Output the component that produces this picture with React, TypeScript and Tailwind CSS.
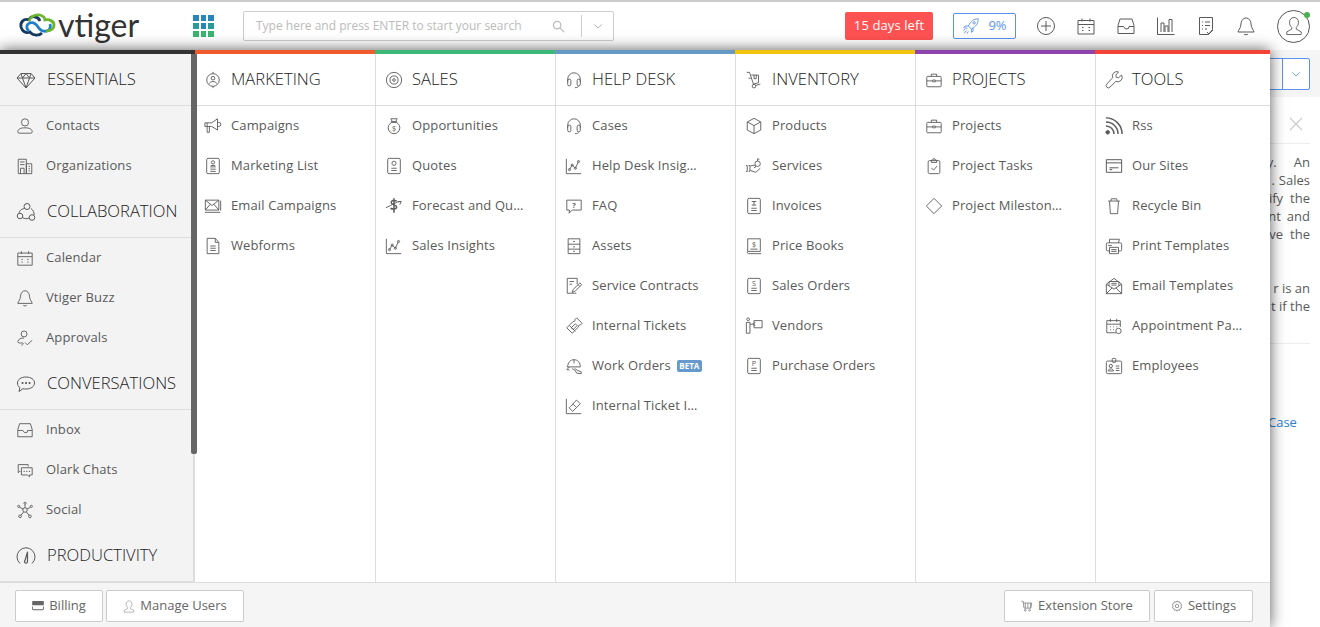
import React from "react";

const P: Record<string, React.ReactNode> = {
  gem: <path d="M5 3.500h10l4 4.500-9 10L1 8zM1 8h18M6.500 8l3.500 10 3.500-10M5 3.500 6.500 8 10 3.500 13.500 8 15 3.500" />,
  target: <><circle cx="10" cy="10" r="7" /><circle cx="10" cy="8" r="2" /><path d="M6 14c.5-3 7.500-3 8 0M10 1v2M10 17v2" /></>,
  sales: <><circle cx="10" cy="10" r="8.500" /><circle cx="10" cy="10" r="4.500" /><circle cx="10" cy="10" r="1.500" /></>,
  headset: <><path d="M3 12V9a7 7 0 0 1 14 0v3M15 17c0 1-2 1.500-4 1.500" /><rect x="3" y="9" width="3.500" height="7.500" rx="1.700" /><rect x="13.500" y="9" width="3.500" height="7.500" rx="1.700" /></>,
  truck: <><path d="M2 1.500h3L9.500 15M7 4.500h8V13l-5.500 1.500M10 4.500v4h2.500v-4M6.500 8H4" /><circle cx="10" cy="16.800" r="2" /><path d="M12 16l5-1.500" /></>,
  case: <><rect x="2" y="6" width="16" height="11.500" rx="1" /><path d="M7 6V3.500h6V6M2 11h6M12 11h6" /><rect x="8.500" y="10" width="3" height="2" /></>,
  wrench: <path d="M18.500 4.500l-3.500 3-2.500-.5-.5-2.500 3-3.500a5 5 0 0 0-6.500 6.500L2 14.500a2.300 2.300 0 0 0 3.500 3.500L12 11.500a5 5 0 0 0 6.500-7z" />,
  user: <><circle cx="10" cy="6" r="4" /><path d="M2 16.500c0-3 3-4.500 8-4.500s8 1.500 8 4.500c0 .8-.5 1.500-1.500 1.500h-13c-1 0-1.500-.7-1.500-1.500z" /></>,
  org: <path d="M2.500 2.500h9v16h-9zM11.500 7.500h6v11h-6zM4.500 5.500h5M4.500 8.500h5M5 18.500v-6h4v6M14 10.500h1.500M14 13h1.500M14 15.500h1.500" />,
  collab: <><circle cx="11" cy="4.500" r="3" /><circle cx="4" cy="14" r="2.800" /><circle cx="16" cy="15.500" r="2.800" /><path d="M8.500 6.500C5 7 3 9 3.500 11M15 6.500c2 1.500 3.500 4 3 6.500M6.500 15.500c2 1.500 4 1.500 6.500.5" /></>,
  cal: <path d="M2 4.500h16V18H2zM2 8.500h16M6 2.500v3M14 2.500v3M6 11.500h1.500M12.500 11.500H14M6 14.500h1.500M12.500 14.500H14" />,
  bell: <path d="M10 2c-3 0-5 3-5 6 0 4-3 6.500-3 8h16c0-1.500-3-4-3-8 0-3-2-6-5-6zM8 18c.5 1 3.500 1 4 0" />,
  appr: <><circle cx="9" cy="5.500" r="3.300" /><path d="M2 14c.5-3 3.500-4 7-4M2 14c0 2 3 1.500 5 1.500 2 0 1 2-1 2.500M10 15l2.500 2.500L18 12.500" /></>,
  chat: <><path d="M10 3c5 0 8.500 2.500 8.500 6S15 15 10 15c-1 0-2 0-3-.3L3 17.500l.8-4C2 12.500 1.500 11 1.500 9 1.500 5.500 5 3 10 3z" /><path d="M6.500 9h.1M10 9h.1M13.500 9h.1" strokeWidth="2" strokeLinecap="round" /></>,
  inbox: <path d="M2 9.500 4 3h12l2 6.500V17.500H2zM2 10.500h5.500l2 2.500 3-.5L13 10.500h5" />,
  olark: <><path d="M6 7.500h12v8h-3v2l-2.500-2H6zM5 11.500H4L2.500 13V4h11v2" /><path d="M9 11.500h.1M12 11.500h.1M15 11.500h.1" strokeWidth="1.500" strokeLinecap="round" /></>,
  social: <><circle cx="10" cy="10" r="2.500" /><circle cx="10" cy="2.500" r="1.200" /><circle cx="3" cy="6" r="1.200" /><circle cx="17" cy="6" r="1.200" /><circle cx="4.500" cy="17" r="1.500" /><circle cx="15.500" cy="17" r="1.500" /><path d="M10 4v3.500M4 7l4 2M16 7l-4 2M5.500 16l3-4M14.500 16l-3-4" /></>,
  gauge: <><path d="M4 17.500a9 9 0 1 1 12 0" /><path d="M11.500 6 9 14.500a1.500 1.500 0 1 0 2.500 1zM5 10.500h.1M3.500 14h.1M15 10.500h.1M16.500 14h.1M6.500 7h.1" strokeWidth="1.200" /></>,
  mega: <path d="M1 6.500h7.500L15 2V14.500L8.500 10.500H1zM3.500 10.500V17H6v-6.500M15 6h1.500a2 2 0 0 1 0 4.500H15M3.500 6.500v4" />,
  mlist: <><rect x="3" y="1.500" width="14" height="17" rx="1.500" /><circle cx="10" cy="6" r="1.800" /><path d="M7 11h6M7 13.500h6M7 16h6M7.500 9.500h5" /></>,
  email: <path d="M1.500 3.500h15v11h-15zM1.500 3.500l7.500 6 7.500-6M1.500 14.500l5.500-6.500M16.500 14.500 11 8M1 17h17M18.500 4v11" />,
  doc: <path d="M3.500 1.500h9l4 4.500v12.500h-13zM12.500 1.500V6h4M7 10h6M7 12.500h6M7 15h6" />,
  bag: <><path d="M6 2h8M7 2.500l1 3h4l1-3M6.500 5.500h7" /><circle cx="10" cy="12" r="6.500" /><text x="10" y="15" fontSize="8" textAnchor="middle" stroke="none" fill="currentColor">$</text></>,
  quote: <><rect x="3" y="1.500" width="14" height="17" rx="1.500" /><circle cx="10" cy="7" r="2.300" /><path d="M7 12.500h6M7 15h6" /></>,
  fore: <><path d="M1 12l5-2.500 8-4 4-.5-1.500 3.500M14 5l4 0" /><path d="M13 4.500C10 3 6.500 4 7 6.500s6 2 6 4.500-4 3-7 1.500M10 1.500v16" strokeWidth="1.700" /></>,
  ins: <><path d="M1.500 2v16.500H18" /><path d="M5 14l3-5 3.500 3.500L15 5" /><circle cx="5" cy="14" r="1.200" /><circle cx="8" cy="9" r="1.200" /><circle cx="11.500" cy="12.500" r="1.200" /><circle cx="15" cy="5" r="1.200" /></>,
  faq: <><path d="M2 3.500h16v11H8L4.500 18l.5-3.500H2z" /><text x="10" y="12" fontSize="8" fontWeight="700" textAnchor="middle" stroke="none" fill="currentColor">?</text></>,
  assets: <path d="M3.500 2h13v16.500h-13zM3.500 8h13M3.500 13.500h13M9 5h2M9 11h2M9 16h2" />,
  contr: <path d="M12.500 18H2.500V1.500H13.500V8M5 5h5M5 8h3M8 17l1-3 7.500-7.500 2 2L11 16zM14.500 8.500l2 2" />,
  ticket: <path d="M13 1l6 6-2 2a1.500 1.500 0 0 0-2 2L8 18 2 12l7-7a1.500 1.500 0 0 0 2-2zM7 12l4.500-4.500 2 2L9 14zM5 9.500 11.500 16" />,
  helm: <path d="M3 11c0-5 3-8 7-8s7 3 7 8H2M10 3v4M5 11l-3 3 3 .5M8 13l3 1.500 2 3.500 5 .5v-2l-5-2-2-2" />,
  tins: <><path d="M1.500 2v16.500H18" /><path d="M13 3.500l4 4-8.500 8.500-4-4 1.500-1.500 1-.5 4-5zM9 8l3 3" /></>,
  box: <path d="M10 1.500 17.500 5.500v9L10 18.500 2.500 14.500v-9zM2.500 5.500 10 9.500l7.500-4M10 9.500v9" />,
  serv: <><path d="M1 9.500h1.500V16H1M4 9.500h1.500V16H4M6 10l4-1 2 2-2 1M6 15l6 2 5-4.500" /><circle cx="14" cy="7.500" r="3" /><path d="M14 4.500V2l2 .5" /></>,
  inv: <><rect x="3" y="1.500" width="14" height="17" rx="1.500" /><path d="M7.500 5h5M10 5v4M7.500 9h5M7 12.500h6M7 15h6" /></>,
  book: <><path d="M3 2h14v14H3zM3 16c-1 1.500 0 2.500 1 2.500h14" /><text x="10" y="11" fontSize="8" textAnchor="middle" stroke="none" fill="currentColor">$</text><path d="M6 13.500h8" /></>,
  so: <><rect x="3" y="1.500" width="14" height="17" rx="1.500" /><text x="10" y="10" fontSize="8" textAnchor="middle" stroke="none" fill="currentColor">S</text><path d="M7 12.500h6M7 15h6" /></>,
  po: <><rect x="3" y="1.500" width="14" height="17" rx="1.500" /><text x="10" y="10" fontSize="8" textAnchor="middle" stroke="none" fill="currentColor">P</text><path d="M7 12.500h6M7 15h6" /></>,
  vend: <><circle cx="3.500" cy="2.500" r="1.500" /><path d="M1.500 18V6h4v12zM5.500 8h3M10 4h9v8h-9zM8.500 8l3-2M8.500 8l3 1.500" /></>,
  task: <><rect x="3.500" y="4" width="13" height="14.500" rx="1.500" /><path d="M7 4c0-1 1.500-1 2-1 0-2 2-2 2 0 .5 0 2 0 2 1v2H7zM7 12l2.500 2.500L13.500 10" /></>,
  diam: <path d="M10 1.500 18.500 10 10 18.500 1.500 10z" />,
  rss: <><circle cx="3" cy="17" r="2" fill="currentColor" /><path d="M1 10c5 0 9 4 9 9M1 5.500c7.500 0 13.500 6 13.500 13.500M1 1c10 0 18 8 18 18" strokeWidth="1.600" /></>,
  site: <path d="M1.500 3h17v14h-17zM1.500 6.500h17M5 12h10M5 14h3" strokeWidth="1.100" />,
  trash: <path d="M3.500 4.500h13M5 4.500l1 14h8l1-14M6.500 4.500 7 2h6l.5 2.500" />,
  print: <path d="M5 6.500V2.500h11l-1 4M3 6.500h14a1.500 1.500 0 0 1 1.500 1.500v6a1.500 1.500 0 0 1-1.500 1.500h-2M5 15.500H3a1.500 1.500 0 0 1-1.500-1.500V8A1.500 1.500 0 0 1 3 6.500M5 11.500h10v7H5zM7 14h6M7 16h6M3.500 9.500h4" />,
  mailo: <path d="M1.500 8 10 1.500 18.500 8v10.500h-17zM1.500 8 10 13.500 18.500 8M1.500 18.500 8 12M18.500 18.500 12 12M4.500 10V5h11v5M7 7h6M7 9h6" />,
  appt: <><path d="M12 17.500H2V4h15v7M2 8h15M6 2v3.500M13 2v3.500M5.500 11h1M9 11h1M12.500 11h1M5.500 14h1M9 14h1" /><circle cx="15" cy="15.500" r="3" /></>,
  emp: <><rect x="1.500" y="4.500" width="17" height="14" rx="1.500" /><rect x="8" y="1.500" width="4" height="4.500" rx="1" /><circle cx="6.500" cy="10" r="1.800" /><path d="M3.500 15.500c0-3 6-3 6 0zM12 10h4M12 12.500h4M12 15h4" /></>,
};

const Ic = ({ n, cls = "w-[18px] h-[18px]" }: { n: string; cls?: string }) => (
  <svg viewBox="0 0 20 20" fill="none" stroke="currentColor" strokeWidth="1" strokeLinejoin="round" className={cls + " shrink-0 text-[#5a5a5a]"}>
    {P[n]}
  </svg>
);

const Item = ({ n, t, badge, side }: { n: string; t: string; badge?: boolean; side?: boolean }) => (
  <div className={"h-10 flex items-center text-[13px] tracking-[0.12px] text-[#5a5a5a] whitespace-nowrap " + (side ? "pl-[16px] gap-[12px]" : "pl-[9px] gap-[9px]")}>
    <Ic n={n} />
    <span>{t}</span>
    {badge && <span className="ml-[-3px] w-[25px] h-[12px] rounded-[2px] bg-[#6699cc] text-white text-[8px] tracking-normal font-bold leading-[12px] text-center">BETA</span>}
  </div>
);

const Head = ({ n, t, side }: { n: string; t: string; side?: boolean }) => (
  <div className={"h-[52px] flex items-center border-b border-[#dddddd] text-[16.6px] font-light text-[#222] whitespace-nowrap " + (side ? "pl-[16px] gap-[11px]" : "pl-[9px] gap-[9px]")}>
    <Ic n={n} cls={side ? "w-[20px] h-[20px]" : "w-[18px] h-[18px]"} />
    <span>{t}</span>
  </div>
);

const cols: { n: string; t: string; bar: string; items: [string, string, boolean?][] }[] = [
  { n: "target", t: "MARKETING", bar: "bg-[#f15a2b]", items: [["mega", "Campaigns"], ["mlist", "Marketing List"], ["email", "Email Campaigns"], ["doc", "Webforms"]] },
  { n: "sales", t: "SALES", bar: "bg-[#3cb878]", items: [["bag", "Opportunities"], ["quote", "Quotes"], ["fore", "Forecast and Qu…"], ["ins", "Sales Insights"]] },
  { n: "headset", t: "HELP DESK", bar: "bg-[#6699c4]", items: [["headset", "Cases"], ["ins", "Help Desk Insig…"], ["faq", "FAQ"], ["assets", "Assets"], ["contr", "Service Contracts"], ["ticket", "Internal Tickets"], ["helm", "Work Orders", true], ["tins", "Internal Ticket I…"]] },
  { n: "truck", t: "INVENTORY", bar: "bg-[#f2c40f]", items: [["box", "Products"], ["serv", "Services"], ["inv", "Invoices"], ["book", "Price Books"], ["so", "Sales Orders"], ["vend", "Vendors"], ["po", "Purchase Orders"]] },
  { n: "case", t: "PROJECTS", bar: "bg-[#8e44ad]", items: [["case", "Projects"], ["task", "Project Tasks"], ["diam", "Project Mileston…"]] },
  { n: "wrench", t: "TOOLS", bar: "bg-[#f44336]", items: [["rss", "Rss"], ["site", "Our Sites"], ["trash", "Recycle Bin"], ["print", "Print Templates"], ["mailo", "Email Templates"], ["appt", "Appointment Pa…"], ["emp", "Employees"]] },
];

const left: { n: string; t: string; items: [string, string][] }[] = [
  { n: "gem", t: "ESSENTIALS", items: [["user", "Contacts"], ["org", "Organizations"]] },
  { n: "collab", t: "COLLABORATION", items: [["cal", "Calendar"], ["bell", "Vtiger Buzz"], ["appr", "Approvals"]] },
  { n: "chat", t: "CONVERSATIONS", items: [["inbox", "Inbox"], ["olark", "Olark Chats"], ["social", "Social"]] },
  { n: "gauge", t: "PRODUCTIVITY", items: [] },
];

const Logo = () => (
  <svg viewBox="0 0 38 27" className="w-[38px] h-[27px] shrink-0" fill="none" strokeWidth="2.800">
    <path d="M22 8c-2-5-9-6-11-1-5-2-9 2-8 7 1 4 5 7 9 5 3 4 9 4 12 1" stroke="#16395f" />
    <path d="M11 18c-3-2-3-7 1-8 3-1 6 1 8 4 2 3 5 5 9 4 3-1 4-4 3-7" stroke="#1e7fc8" />
    <path d="M11 8c1-4 6-7 11-6 3 1 5 3 5 5 4-1 9 1 9 5 0 4-4 6-8 6" stroke="#6bb62d" />
  </svg>
);

const Topbtn = ({ n }: { n: string }) => <Ic n={n} cls="w-[20px] h-[20px]" />;

const Btn = ({ children, cls }: { children: React.ReactNode; cls: string }) => (
  <div className={"h-[32px] flex items-center justify-center gap-[5px] bg-white border border-[#cccccc] rounded-[2px] text-[13px] text-[#666] " + cls}>{children}</div>
);

export default function App() {
  return (
    <div className="relative w-[1320px] h-[627px] overflow-hidden bg-white font-['Open_Sans',sans-serif]">
      <header className="h-[50px] border-t-2 border-[#cccccc] flex items-center">
        <div className="w-[193px] pl-[18px] flex items-center gap-[2px]">
          <Logo />
          <span className="font-['Lato',sans-serif] text-[32px] leading-none text-[#333] pb-[3px]">vtiger</span>
        </div>
        <div className="grid grid-cols-3 gap-[2px] w-[21px] shrink-0">
          {["bg-[#2a86b8]", "bg-[#2a86b8]", "bg-[#2a86b8]", "bg-[#2a9a9a]", "bg-[#2a86b8]", "bg-[#2a9a9a]", "bg-[#3cb371]", "bg-[#3cb371]", "bg-[#3cb371]"].map((c, i) => (
            <div key={i} className={"h-[6px] " + c} />
          ))}
        </div>
        <div className="ml-[29px] w-[371px] h-[30px] border border-[#cccccc] rounded-[2px] flex items-center pl-[12px] text-[12px] text-[#bbbbbb] whitespace-nowrap">
          <span className="w-[296px]">Type here and press ENTER to start your search</span>
          <svg viewBox="0 0 14 14" className="w-[13px] h-[13px] text-[#bbb]" fill="none" stroke="currentColor" strokeWidth="1.300"><circle cx="5.500" cy="5.500" r="4" /><path d="M8.500 8.500l4.500 4.500" /></svg>
          <div className="ml-[16px] w-px h-[22px] bg-[#cccccc]" />
          <svg viewBox="0 0 12 12" className="ml-[11px] w-[10px] h-[10px] text-[#aaa]" fill="none" stroke="currentColor"><path d="M1.500 4 6 8.500 10.500 4" /></svg>
        </div>
        <div className="ml-[231px] w-[88px] h-[28px] bg-[#ff5252] rounded-[2px] text-white text-[13px] tracking-[0.1px] flex items-center justify-center">15 days left</div>
        <div className="ml-[20px] w-[63px] h-[26px] border border-[#5a93ee] rounded-[2px] flex items-center justify-center gap-[8px] text-[13px] text-[#5a93ee]">
          <svg viewBox="0 0 20 20" className="w-[18px] h-[18px]" fill="none" stroke="currentColor"><path d="M18 2c-5 0-8 2.500-11 8l3.500 3.500c5-3 7.500-6 7.500-11.500zM7 10H3.500L2 12l4 .5M10.500 13.500V17l2-1.500-.5-4M5 15l-2.500 3M7 16l-1.500 2.500M3.500 13.500 1.500 15" /><circle cx="13.500" cy="6.500" r="1.300" /></svg>
          9%
        </div>
        <div className="ml-[20px] flex items-center gap-[20px]">
          <svg viewBox="0 0 20 20" fill="none" stroke="currentColor" className="w-[20px] h-[20px] text-[#5a5a5a]"><circle cx="10" cy="10" r="8.500" /><path d="M10 5v10M5 10h10" /></svg>
          <Topbtn n="cal" />
          <Topbtn n="inbox" />
          <svg viewBox="0 0 20 20" fill="none" stroke="currentColor" className="w-[20px] h-[20px] text-[#5a5a5a]"><path d="M1.500 1.500v17h17M5 16V7h3v9M9 16V10h3v6M13 16V3.500h3V16" /></svg>
          <svg viewBox="0 0 20 20" fill="none" stroke="currentColor" className="w-[20px] h-[20px] text-[#5a5a5a]"><path d="M3.500 1.500h13v12l-4 5h-9zM6 6h1M9 6h5M6 9.500h1M9 9.500h5M6 13h1M9 13h2M11 16l2 2 4-4" /></svg>
          <Topbtn n="bell" />
        </div>
        <div className="relative ml-[21px] w-[33px] h-[33px] rounded-full border border-[#555] flex items-center justify-center">
          <svg viewBox="0 0 20 22" fill="none" stroke="currentColor" className="w-[18px] h-[20px] text-[#5a5a5a]"><path d="M10 1.500c-3 0-5 2.500-5 5.500 0 2.500 1 4 2.500 5.500v2L2 17.500V20.500h16v-3l-5.500-3v-2C14 11 15 9.500 15 7c0-3-2-5.500-5-5.500z" /></svg>
          <span className="absolute right-[-1px] top-[1px] w-[6px] h-[6px] rounded-full bg-[#4caf50]" />
        </div>
      </header>

      {/* page behind the menu */}
      <div className="h-[47px] bg-[#f5f5f5] flex justify-end items-center pr-[10px]">
        <div className="w-[60px] h-[32px] bg-white border border-[#5a93ee] rounded-[2px] flex justify-end">
          <div className="w-[27px] border-l border-[#5a93ee] flex items-center justify-center text-[#5a93ee]">
            <svg viewBox="0 0 12 12" className="w-[10px] h-[10px]" fill="none" stroke="currentColor"><path d="M1.500 4 6 8.500 10.500 4" /></svg>
          </div>
        </div>
      </div>
      <div className="w-[60px] ml-auto mr-[10px] text-[13px] leading-[18px] text-[#5a5a5a] whitespace-nowrap">
        <div className="h-[47px] border-b border-[#eeeeee] flex items-center justify-end pr-[7px] pt-[7px]">
          <svg viewBox="0 0 14 14" className="w-[14px] h-[14px] text-[#cccccc]" fill="none" stroke="currentColor" strokeWidth="1.200"><path d="M1 1l12 12M13 1 1 13" /></svg>
        </div>
        <div className="pt-[9px] flex flex-col items-end">
          <div className="flex gap-[17px]"><span>y.</span><span>An</span></div>
          <div className="flex gap-[4px]"><span>.</span><span>Sales</span></div>
          <div className="flex gap-[7px]"><span>ify</span><span>the</span></div>
          <div className="flex gap-[6px]"><span>nt</span><span>and</span></div>
          <div className="flex gap-[7px]"><span>ive</span><span>the</span></div>
          <div className="h-[36px]" />
          <div>r is an</div>
          <div>t if the</div>
        </div>
        <div className="mt-[28px] border-t border-[#eeeeee] h-[70px]" />
        <div className="text-[#2b7fd6] ml-[18px]">Case</div>
      </div>

      {/* mega menu */}
      <div className="absolute left-0 top-[50px] w-[1270px] h-[577px] flex flex-col bg-white shadow-[0_0_14px_rgba(0,0,0,0.65)]">
        <div className="flex flex-1 min-h-0">
          <div className="relative w-[195px] shrink-0 bg-[#f3f3f3] flex flex-col border-t-4 border-[#333333]">
            <div className="overflow-hidden flex-1">
              {left.map((s) => (
                <div key={s.t}>
                  <Head n={s.n} t={s.t} side />
                  {s.items.map(([n, t]) => <Item key={t} n={n} t={t} side />)}
                </div>
              ))}
            </div>
            <div className="absolute right-0 top-0 bottom-0 w-[2px] bg-[#dddddd]" />
            <div className="absolute right-[-2px] top-0 w-[6px] h-[400px] bg-[#666666] rounded-b-[2px]" />
          </div>
          {cols.map((c, i) => (
            <div key={c.t} className={"shrink-0 flex flex-col " + (i === 0 ? "w-[180px]" : i === 5 ? "w-[175px] border-l border-[#dddddd]" : "w-[180px] border-l border-[#dddddd]")}>
              <div className={"h-[4px] " + (i === 0 ? "" : "-ml-px ") + c.bar} />
              <Head n={c.n} t={c.t} />
              {c.items.map(([n, t, b]) => <Item key={t} n={n} t={t} badge={b} />)}
            </div>
          ))}
        </div>
        <footer className="h-[45px] shrink-0 bg-[#f5f5f5] border-t border-[#dddddd] flex items-center pl-[15px] pr-[17px] pt-[2px] gap-[3px]">
          <Btn cls="w-[88px]">
            <svg viewBox="0 0 14 12" className="w-[12px] h-[10px] text-[#666]" fill="currentColor"><path d="M1 0h12a1 1 0 0 1 1 1v4H0V1a1 1 0 0 1 1-1zM0 6.500h1V10h12V6.500h1V10a1 1 0 0 1-1 1H1a1 1 0 0 1-1-1z" /></svg>
            Billing
          </Btn>
          <Btn cls="w-[138px]">
            <svg viewBox="0 0 20 22" fill="none" stroke="currentColor" className="w-[12px] h-[13px] text-[#888]"><path d="M10 1.500c-3 0-5 2.500-5 5.500 0 2.500 1 4 2.500 5.500v2L2 17.500V20.500h16v-3l-5.500-3v-2C14 11 15 9.500 15 7c0-3-2-5.500-5-5.500z" /></svg>
            Manage Users
          </Btn>
          <Btn cls="w-[146px] ml-auto">
            <svg viewBox="0 0 14 14" className="w-[12px] h-[12px] text-[#888]" fill="none" stroke="currentColor"><path d="M.5 1.500h2l1 8h8l1-6h-10M5 3.500v6M8 3.500v6M11 3.500v6" /><circle cx="5" cy="12" r="1" /><circle cx="10" cy="12" r="1" /></svg>
            Extension Store
          </Btn>
          <Btn cls="w-[99px] ml-[1px]">
            <svg viewBox="0 0 14 14" className="w-[12px] h-[12px] text-[#888]" fill="none" stroke="currentColor"><circle cx="7" cy="7" r="2" /><path d="M7 1l1 1.500 2-.5.500 2L12.500 5 11.500 7l1 2-2 1-.5 2-2-.5L7 13l-1-1.500-2 .5-.5-2-2-1 1-2-1-2 2-1 .5-2 2 .5z" /></svg>
            Settings
          </Btn>
        </footer>
      </div>
    </div>
  );
}
